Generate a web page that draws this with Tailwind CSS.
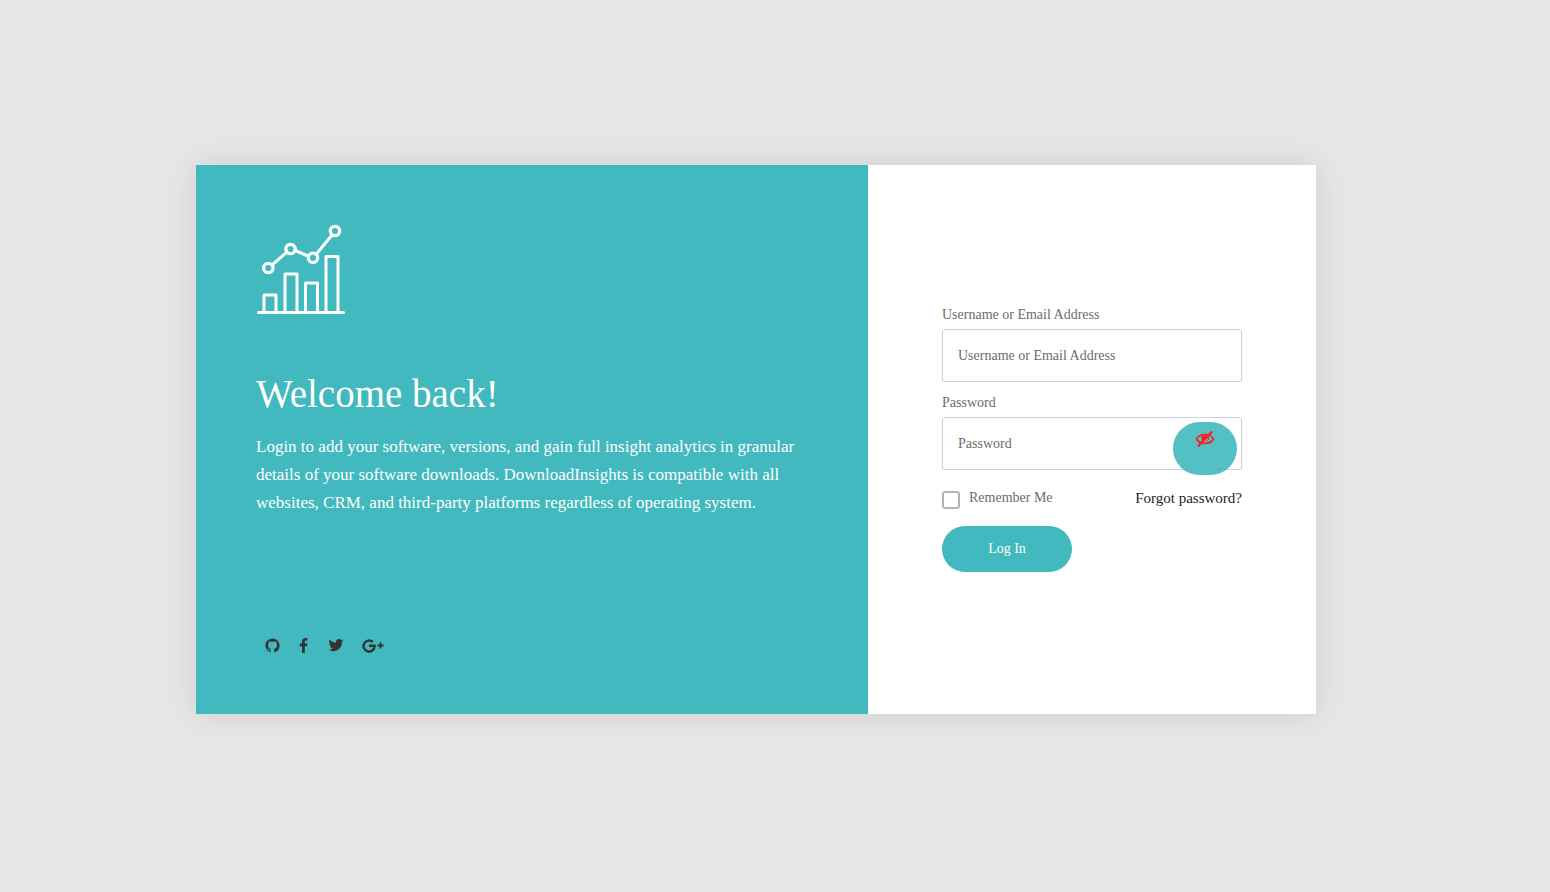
<!DOCTYPE html>
<html lang="en">
<head>
<meta charset="utf-8">
<meta name="viewport" content="width=device-width, initial-scale=1">
<title>Login</title>
<script src="https://cdn.jsdelivr.net/npm/@tailwindcss/browser@4"></script>
</head>
<body class="min-h-screen bg-[#e6e6e6] font-['Liberation_Serif',serif] text-[#6c6c6c]">
<div class="flex min-h-screen items-center justify-center pr-[38px] pb-[13px]">
  <main class="flex w-full max-w-[1120px] flex-col shadow-[0_0_30px_rgba(0,0,0,0.1)] md:flex-row">
    <section class="flex flex-col bg-[#41b9be] p-[60px] text-white md:w-3/5">
      <svg class="size-[90px] overflow-visible" viewBox="0 0 90 90" fill="none" stroke="#fff" stroke-width="3" stroke-linejoin="round" stroke-linecap="round" aria-hidden="true">
        <path d="M2.500 87.500H87.500M8 87V70H20V87M29 87V49H41V87M49.500 87V58H61.500V87M70 87V31.500H82V87"/>
        <path d="M16 40 31 27M39 25.500 52 31M60 29.500 76 10"/>
        <g stroke-width="3.200"><circle cx="12.300" cy="43" r="4.700"/><circle cx="34.500" cy="24" r="4.700"/><circle cx="57" cy="32.800" r="4.700"/><circle cx="79" cy="6" r="4.700"/></g>
      </svg>
      <h1 class="mt-[54px] text-[39px] leading-[50px]">Welcome back!</h1>
      <p class="mt-[14px] text-[17px] leading-7">Login to add your software, versions, and gain full insight analytics in granular details of your software downloads. DownloadInsights is compatible with all websites, CRM, and third-party platforms regardless of operating system.</p>
      <nav class="mt-[120px] flex h-[17px] items-center gap-[18px] pl-[9px] text-[#333]" aria-label="Social links">
        <a href="#" aria-label="GitHub"><svg class="size-[15px]" viewBox="-.5 -.5 17 17" fill="currentColor"><path d="M8 0C3.580 0 0 3.580 0 8c0 3.540 2.290 6.530 5.470 7.590.4.070.55-.17.55-.38 0-.19-.01-.82-.01-1.490-2.010.37-2.530-.49-2.690-.94-.09-.23-.48-.94-.82-1.130-.28-.15-.68-.52-.01-.53.63-.01 1.080.58 1.230.82.72 1.210 1.870.87 2.330.66.070-.52.28-.87.51-1.070-1.780-.2-3.640-.89-3.640-3.950 0-.87.31-1.590.82-2.150-.08-.2-.36-1.020.08-2.120 0 0 .67-.21 2.200.82.64-.18 1.320-.27 2-.27.68 0 1.360.09 2 .27 1.530-1.040 2.200-.82 2.200-.82.44 1.100.16 1.920.08 2.120.51.56.82 1.270.82 2.150 0 3.070-1.870 3.750-3.650 3.950.29.25.54.73.54 1.480 0 1.070-.01 1.930-.01 2.200 0 .21.15.46.55.38A8.013 8.013 0 0016 8c0-4.420-3.580-8-8-8z"/></svg></a>
        <a href="#" aria-label="Facebook"><svg class="h-[15px] w-[11px]" viewBox="350 0 1100 1664" fill="currentColor"><path d="M1343 12v264h-157q-86 0-116 36t-30 108v189h293l-39 296h-254v759h-306v-759h-255v-296h255v-218q0-186 104-288.500t277-102.500q147 0 228 12z"/></svg></a>
        <a href="#" aria-label="Twitter"><svg class="size-[17px]" viewBox="-50 40 1800 1800" fill="currentColor"><path d="M1684 408q-67 98-162 167 1 14 1 42 0 130-38 259.500t-115.500 248.500-184.500 210.500-258 146-323 54.500q-271 0-496-145 35 4 78 4 225 0 401-138-105-2-188-64.500t-114-159.500q33 5 61 5 43 0 85-11-112-23-185.500-111.500t-73.500-205.500v-4q68 38 146 41-66-44-105-115t-39-154q0-88 44-163 121 149 294.500 238.500t371.500 99.500q-8-38-8-74 0-134 94.500-228.500t228.500-94.500q140 0 236 102 109-21 205-78-37 115-142 178 93-10 186-50z"/></svg></a>
        <a href="#" aria-label="Google Plus"><svg class="h-[14px] w-[22px]" viewBox="0 0 22 14" fill="none" stroke="currentColor"><path d="M10.800 3A5.500 5.500 0 1 0 12.600 6.800H7" stroke-width="2.400"/><path d="M15.500 6.500H21.500M18.500 3.500V9.500" stroke-width="1.900"/></svg></a>
      </nav>
    </section>
    <section class="flex flex-col justify-center bg-white px-6 pt-10 pb-[42px] md:w-2/5 md:px-[74px]">
      <form class="flex flex-col text-[14px] leading-5">
        <label for="user">Username or Email Address</label>
        <input id="user" type="text" placeholder="Username or Email Address" class="mt-1 h-[53px] w-full rounded-[3px] border border-[#d0cde3] px-[15px] placeholder:text-[#6c6c6c]">
        <label for="pass" class="mt-[11px]">Password</label>
        <div class="relative mt-1">
          <input id="pass" type="password" placeholder="Password" class="block h-[53px] w-full rounded-[3px] border border-[#d0cde3] px-[15px] placeholder:text-[#6c6c6c]">
          <button type="button" aria-label="Show password" class="absolute top-[5px] right-[5px] flex h-[53px] w-16 justify-center rounded-[30px] bg-[#41b9be]/90 pt-2 text-[#ff1a1a]">
            <svg class="h-[18px] w-5" viewBox="0 0 20 18" fill="none" stroke="currentColor" aria-hidden="true">
              <path d="M1.500 9C5 3 15 3 18.500 9 15 15 5 15 1.500 9Z" stroke-width="1.500"/>
              <path d="M6.500 5.500Q6 10.500 8.500 12L13 5.500Z" fill="currentColor" stroke="none"/>
              <path d="M13.500 7Q14 10.500 11 12" stroke-width="1"/>
              <path d="M3 16.500 17 1.500" stroke-width="2.200"/>
            </svg>
          </button>
        </div>
        <div class="mt-[18px] flex justify-between">
          <div class="flex items-start gap-[9px]">
            <input id="remember" type="checkbox" class="mt-[3px] size-[18px] appearance-none rounded-[3px] border-2 border-[#b4b4b4] bg-white checked:bg-[#41b9be]">
            <label for="remember">Remember Me</label>
          </div>
          <a href="#" class="text-[15px] leading-5 text-[#212529]">Forgot password?</a>
        </div>
        <button type="submit" class="mt-[17px] h-[46px] w-[130px] rounded-full bg-[#41b9be] text-white">Log In</button>
      </form>
    </section>
  </main>
</div>
</body>
</html>
